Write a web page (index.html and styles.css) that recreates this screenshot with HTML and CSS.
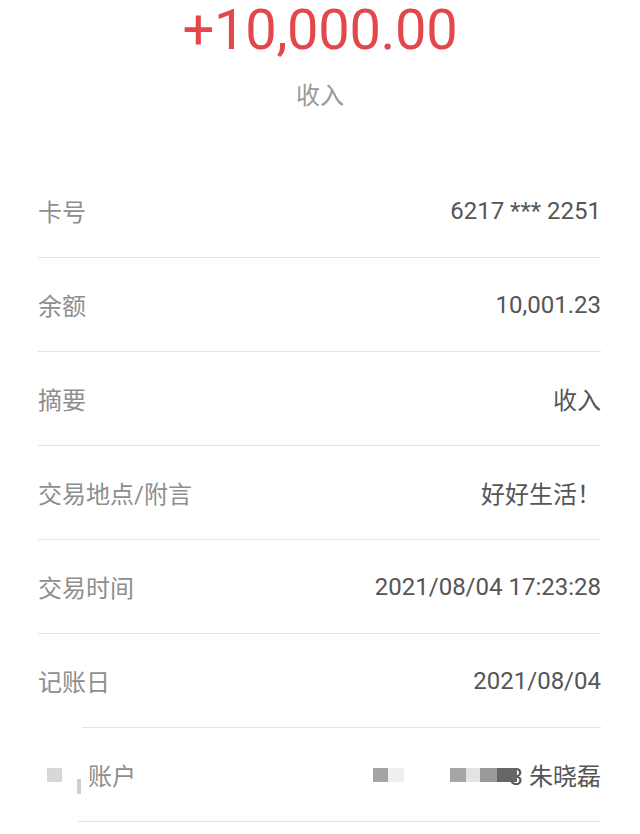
FILE: index.html
```html
<!DOCTYPE html>
<html lang="zh-CN">
<head>
    <meta charset="UTF-8">
    <meta name="viewport" content="width=device-width, initial-scale=1.0">
    <title>交易详情</title>
    <link rel="stylesheet" href="styles.css">
</head>
<body>
<div class="detail">
    <div class="amount">+10,000.00</div>
    <div class="kind">收入</div>

    <div class="list">
        <div class="row">
            <span class="label">卡号</span>
            <span class="value">6217 *** 2251</span>
        </div>
        <div class="line"></div>
        <div class="row">
            <span class="label">余额</span>
            <span class="value">10,001.23</span>
        </div>
        <div class="line"></div>
        <div class="row">
            <span class="label">摘要</span>
            <span class="value">收入</span>
        </div>
        <div class="line"></div>
        <div class="row">
            <span class="label">交易地点/附言</span>
            <span class="value">好好生活！</span>
        </div>
        <div class="line"></div>
        <div class="row">
            <span class="label">交易时间</span>
            <span class="value">2021/08/04 17:23:28</span>
        </div>
        <div class="line"></div>
        <div class="row">
            <span class="label">记账日</span>
            <span class="value">2021/08/04</span>
        </div>
        <div class="line line-cut"></div>
        <div class="row">
            <span class="label">
                <span class="blot"></span>
                <span class="bar"></span>
                <span class="cut-text">账户</span>
            </span>
            <span class="value">
                <span class="mosaic">
                    <i class="m1"></i><i class="m2"></i>
                </span>
                <span class="mosaic mosaic-last">
                    <i class="m3"></i><i class="m4"></i><i class="m5"></i><i class="m6"></i>
                </span>3 朱晓磊
            </span>
        </div>
        <div class="line line-cut2"></div>
    </div>
</div>
</body>
</html>
```

FILE: styles.css
```css
body {
    margin: 0;
    background-color: #ffffff;
    font-family: "Roboto", "Noto Sans CJK SC", sans-serif;
}

.amount {
    font-size: 56px;
    line-height: 60px;
    letter-spacing: -0.3px;
    color: #e3474c;
    text-align: center;
}

.kind {
    margin-top: 24px;
    font-size: 24px;
    line-height: 24px;
    color: #999999;
    text-align: center;
}

.list {
    margin-top: 56px;
    padding: 0 39px 0 38px;
}

.row {
    height: 93px;
    display: flex;
    align-items: center;
    justify-content: space-between;
    font-size: 24px;
}

.label {
    color: #8e8e8e;
    display: flex;
    align-items: center;
}

.value {
    color: #555555;
    display: flex;
    align-items: center;
}

.line {
    height: 1px;
    background-color: #e4e4e4;
}

.line-cut {
    margin-left: 44px;
}

.line-cut2 {
    margin-left: 40px;
}

/* 打码部分 */
.blot {
    width: 15px;
    height: 14px;
    margin-left: 9px;
    background-color: #d8d8d8;
}

.bar {
    width: 4px;
    height: 15px;
    margin-left: 15px;
    margin-top: 24px;
    background-color: #cfcfcf;
}

.cut-text {
    margin-left: 7px;
}

.mosaic {
    display: flex;
}

.mosaic i {
    display: block;
    height: 14px;
}

.m1 { width: 15px; background-color: #a4a4a4; }
.m2 { width: 16px; background-color: #efefef; }
.m3 { width: 16px; background-color: #a6a6a6; }
.m4 { width: 14px; background-color: #e3e3e3; }
.m5 { width: 17px; background-color: #999999; }
.m6 { width: 20px; background-color: #666666; }

.mosaic + .mosaic {
    margin-left: 46px;
}

.mosaic-last {
    position: relative;
    z-index: 1;
    margin-right: -7px;
}
```
